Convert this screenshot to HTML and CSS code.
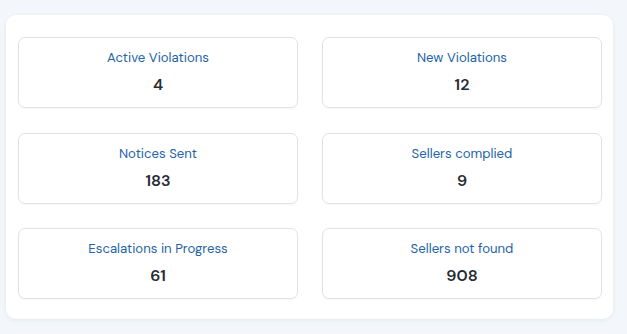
FILE: index.html
```html
<!DOCTYPE html>
<html>
<head>
<meta charset="utf-8">
<link rel="stylesheet" href="styles.css">
</head>
<body>
<div class="panel">
  <div class="grid">
    <div class="card"><div class="label">Active Violations</div><div class="value">4</div></div>
    <div class="card"><div class="label">New Violations</div><div class="value">12</div></div>
    <div class="card"><div class="label">Notices Sent</div><div class="value">183</div></div>
    <div class="card"><div class="label">Sellers complied</div><div class="value">9</div></div>
    <div class="card"><div class="label">Escalations in Progress</div><div class="value">61</div></div>
    <div class="card"><div class="label">Sellers not found</div><div class="value">908</div></div>
  </div>
</div>
</body>
</html>
```
FILE: styles.css
```css
html, body { margin: 0; padding: 0; }
body {
  background: #f3f7fb;
  font-family: "DM Sans", Inter, "Noto Sans", sans-serif;
  width: 627px;
  height: 334px;
  overflow: hidden;
}
.panel {
  margin: 15px 0 0 6px;
  width: 607px;
  height: 304px;
  box-sizing: border-box;
  background: #fff;
  border-radius: 10px;
  box-shadow: 0 1px 4px rgba(30, 50, 80, 0.08);
  padding: 22px 11px 0 12px;
}
.grid {
  display: grid;
  grid-template-columns: 280px 280px;
  column-gap: 24px;
  row-gap: 24.5px;
}
.card {
  height: 71px;
  box-sizing: border-box;
  border: 1px solid #dfe2e6;
  border-radius: 7px;
  box-shadow: 0 1px 2px rgba(0,0,0,0.04);
  display: flex;
  flex-direction: column;
  align-items: center;
  padding-top: 12px;
}
.label {
  font-size: 13.2px;
  color: #2463a6;
  line-height: 16px;
}
.value {
  margin-top: 9px;
  font-size: 16px;
  font-weight: 600;
  color: #262b34;
  line-height: 20px;
}
```
